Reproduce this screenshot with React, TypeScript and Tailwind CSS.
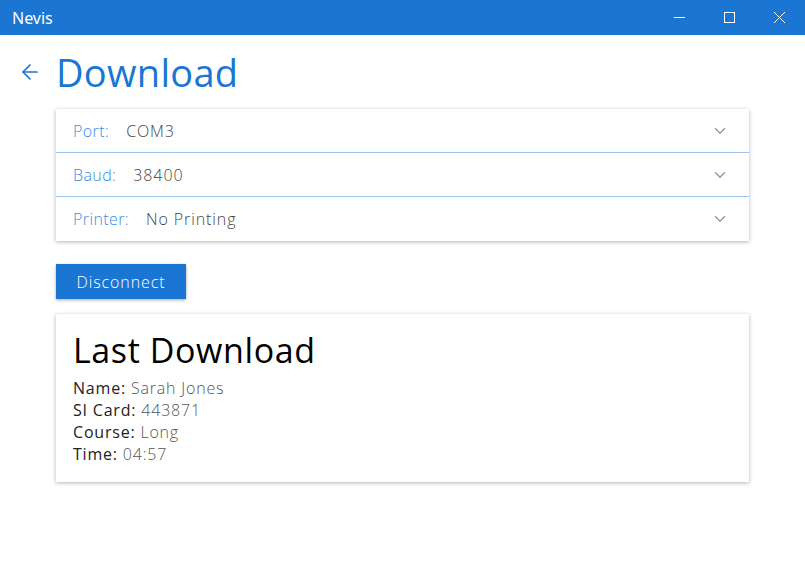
import React from 'react';
import { ArrowLeft, ChevronDown } from 'lucide-react';

const body = { fontFamily: '"Open Sans", "Noto Sans", sans-serif' };

const selects = [
  { label: 'Port:', value: 'COM3' },
  { label: 'Baud:', value: '38400' },
  { label: 'Printer:', value: 'No Printing' },
];

const details = [
  { label: 'Name:', value: 'Sarah Jones' },
  { label: 'SI Card:', value: '443871' },
  { label: 'Course:', value: 'Long' },
  { label: 'Time:', value: '04:57' },
];

export default function App() {
  return (
    <div className="w-[805px] h-[582px] bg-white overflow-hidden" style={body}>
      {/* Title bar */}
      <div className="h-[35px] bg-[#1a76d2] flex items-center justify-between text-white">
        <span className="pl-3 text-[16px] font-['Noto_Sans',sans-serif]">Nevis</span>
        <div className="flex h-full pr-[1px]">
          <div className="w-[50px] flex items-center justify-center">
            <svg width="11" height="11" viewBox="0 0 11 11"><path d="M0 5.5H11" stroke="white" strokeWidth="1" /></svg>
          </div>
          <div className="w-[50px] flex items-center justify-center">
            <svg width="11" height="11" viewBox="0 0 11 11"><rect x="0.5" y="0.5" width="10" height="10" fill="none" stroke="white" strokeWidth="1" /></svg>
          </div>
          <div className="w-[50px] flex items-center justify-center">
            <svg width="11" height="11" viewBox="0 0 11 11"><path d="M0 0L11 11M11 0L0 11" stroke="white" strokeWidth="1" /></svg>
          </div>
        </div>
      </div>

      {/* Heading */}
      <div className="flex items-center h-[74px] pl-[18px]">
        <ArrowLeft size={24} strokeWidth={1.7} className="text-[#1a76d2]" />
        <h1 className="ml-[14px] text-[38px] tracking-[0.3px] text-[#1a76d2] font-['Open_Sans',sans-serif] leading-none">Download</h1>
      </div>

      <div className="ml-[56px] w-[693px]">
        {/* Select card */}
        <div className="bg-white shadow-[0_1px_4px_rgba(0,0,0,0.3)] divide-y divide-[#9fc6ee]">
          {selects.map((s) => (
            <div key={s.label} className="h-[44px] flex items-center pl-[17px] pr-[20px]">
              <span className="text-[16px] font-light tracking-[0.4px] text-[#3d8be0]">{s.label}</span>
              <span className="ml-[17px] text-[16px] font-light tracking-[0.9px] text-[#444]">{s.value}</span>
              <ChevronDown size={18} strokeWidth={2} className="ml-auto text-[#999]" />
            </div>
          ))}
        </div>

        <button className="mt-[23px] w-[130px] h-[35px] bg-[#1a76d2] text-white text-[16px] font-light tracking-[0.9px] shadow-[0_1px_3px_rgba(0,0,0,0.35)]">
          Disconnect
        </button>

        {/* Last download card */}
        <div className="mt-[15px] h-[168px] bg-white shadow-[0_1px_4px_rgba(0,0,0,0.3)] pl-[17px] pt-[16px]">
          <h2 className="text-[34px] tracking-[0.6px] text-black leading-[40px]">Last Download</h2>
          <div className="mt-[7px] text-[16px] leading-[22px] tracking-[0.8px]">
            {details.map((d) => (
              <div key={d.label}>
                <span className="text-[#222]">{d.label}</span>{' '}
                <span className="font-light text-[#555]">{d.value}</span>
              </div>
            ))}
          </div>
        </div>
      </div>
    </div>
  );
}
